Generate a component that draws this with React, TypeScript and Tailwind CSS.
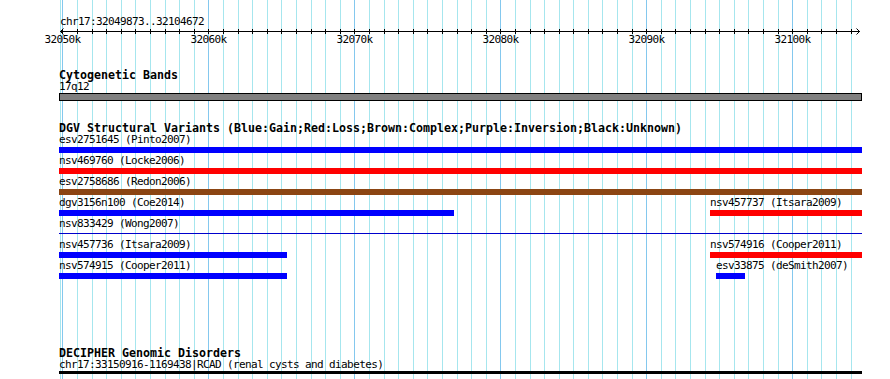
import React from "react";

const kbX = (i: number) => 62.3 + 14.6 * i;
const PANEL_L = 59;
const PANEL_R = 862;

type Feat = { label: string; x: number; x2: number; color: string; thin?: boolean };

const rows: Feat[][] = [
  [{ label: "esv2751645 (Pinto2007)", x: 59, x2: 862, color: "#0000ff" }],
  [{ label: "nsv469760 (Locke2006)", x: 59, x2: 862, color: "#ff0000" }],
  [{ label: "esv2758686 (Redon2006)", x: 59, x2: 862, color: "#8b4513" }],
  [
    { label: "dgv3156n100 (Coe2014)", x: 59, x2: 454, color: "#0000ff" },
    { label: "nsv457737 (Itsara2009)", x: 710, x2: 862, color: "#ff0000" },
  ],
  [{ label: "nsv833429 (Wong2007)", x: 59, x2: 862, color: "#0000ff", thin: true }],
  [
    { label: "nsv457736 (Itsara2009)", x: 59, x2: 287, color: "#0000ff" },
    { label: "nsv574916 (Cooper2011)", x: 710, x2: 862, color: "#ff0000" },
  ],
  [
    { label: "nsv574915 (Cooper2011)", x: 59, x2: 287, color: "#0000ff" },
    { label: "esv33875 (deSmith2007)", x: 716, x2: 745, color: "#0000ff" },
  ],
];

const ticks = Array.from({ length: 55 }, (_, i) => i);
const majors = [0, 10, 20, 30, 40, 50];

const mono = "font-['DejaVu_Sans_Mono','Liberation_Mono',monospace]";
const labelCls = `${mono} text-[11px] tracking-[-0.62px] leading-[10px] text-black whitespace-nowrap`;
const titleCls = `${mono} font-bold text-[11.63px] leading-[10px] text-black whitespace-nowrap`;

function Grid() {
  return (
    <svg className="absolute inset-0" width={890} height={379} shapeRendering="crispEdges">
      <rect x={60} y={0} width={1} height={379} fill="#a6e6ee" />
      {ticks.map((i) => (
        <rect
          key={i}
          x={Math.round(kbX(i))}
          y={0}
          width={1}
          height={379}
          fill={i % 10 === 0 ? "#84c8ee" : "#a6e6ee"}
        />
      ))}
    </svg>
  );
}

function Ruler() {
  return (
    <svg width={890} height={50} className="block relative" shapeRendering="crispEdges">
      <text
        x={60}
        y={25}
        fontFamily="DejaVu Sans Mono, Liberation Mono, monospace"
        fontSize={11}
        letterSpacing={-0.62}
        fill="#000"
      >
        chr17:32049873..32104672
      </text>
      <rect x={60} y={31} width={800} height={1} fill="#000" />
      {ticks.map((i) => (
        <rect key={i} x={Math.round(kbX(i))} y={29} width={1} height={5} fill="#000" />
      ))}
      <polyline points="63.5,28.5 60.5,31.5 63.5,34.5" fill="none" stroke="#000" strokeWidth={1} shapeRendering="auto" />
      <polyline points="856.5,28.5 859.5,31.5 856.5,34.5" fill="none" stroke="#000" strokeWidth={1} shapeRendering="auto" />
      {majors.map((m) => (
        <text
          key={m}
          x={kbX(m) + 0.3}
          y={43}
          textAnchor="middle"
          fontFamily="DejaVu Sans Mono, Liberation Mono, monospace"
          fontSize={11}
          letterSpacing={-0.62}
          fill="#000"
        >
          {`${32050 + m}k`}
        </text>
      ))}
    </svg>
  );
}

function FeatureRow({ feats }: { feats: Feat[] }) {
  return (
    <div className="relative h-[18px] w-[803px]">
      {feats.map((f) => (
        <div
          key={f.label}
          className="absolute top-0 flex flex-col"
          style={{ left: f.x - PANEL_L, width: f.x2 - f.x }}
        >
          <div className={`h-[12px] ${labelCls}`}>{f.label}</div>
          {f.thin ? (
            <div className="h-[6px] pt-[2px]">
              <div className="h-[1px] bg-[#0000cc]" />
            </div>
          ) : (
            <div className="h-[6px]" style={{ backgroundColor: f.color }} />
          )}
        </div>
      ))}
    </div>
  );
}

export default function App() {
  return (
    <div className="relative w-[890px] h-[379px] bg-white overflow-hidden">
      <Grid />
      <div className="relative flex flex-col">
        <Ruler />
        <div className="flex flex-col pl-[59px]" style={{ width: PANEL_R }}>
          <section className="mt-[20px] flex flex-col">
            <div className={`h-[12px] ${titleCls}`}>Cytogenetic Bands</div>
            <div className={`h-[11px] ${labelCls}`}>17q12</div>
            <div className="h-[8px] w-[803px] border border-black bg-[#808080]" />
          </section>

          <section className="mt-[22px] flex flex-col">
            <div className={`h-[12px] ${titleCls}`}>
              DGV Structural Variants (Blue:Gain;Red:Loss;Brown:Complex;Purple:Inversion;Black:Unknown)
            </div>
            <div className="flex flex-col gap-[3px]">
              {rows.map((r, i) => (
                <FeatureRow key={i} feats={r} />
              ))}
            </div>
          </section>

          <section className="mt-[69px] flex flex-col">
            <div className={`h-[12px] ${titleCls}`}>DECIPHER Genomic Disorders</div>
            <div className={`h-[11px] ${labelCls}`}>
              chr17:33150916-1169438|RCAD (renal cysts and diabetes)
            </div>
            <div className="h-[3px] w-[803px] bg-black" />
          </section>
        </div>
      </div>
    </div>
  );
}
